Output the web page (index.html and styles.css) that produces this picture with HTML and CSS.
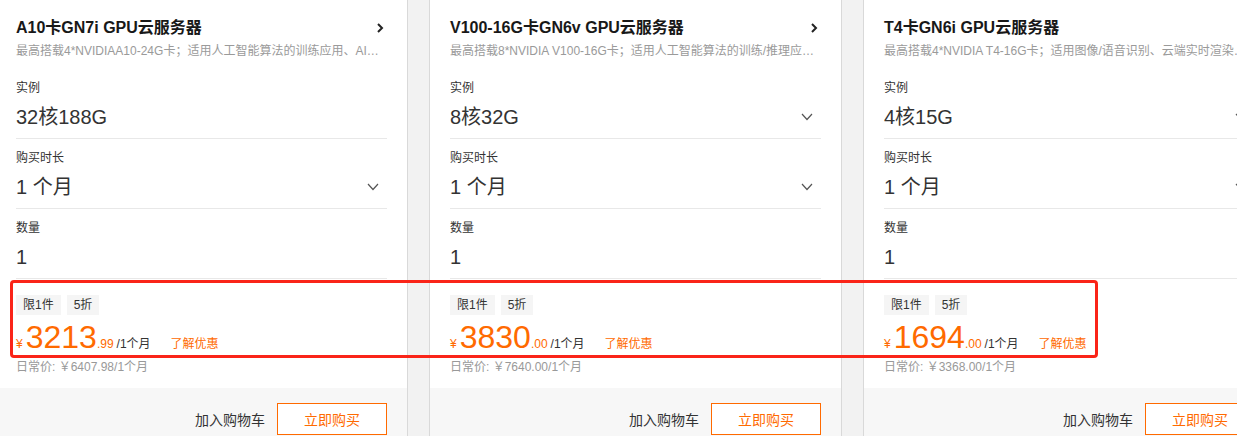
FILE: index.html
```html
<!DOCTYPE html>
<html lang="zh-CN">
<head>
    <meta charset="UTF-8">
    <meta name="viewport" content="width=device-width, initial-scale=1.0">
    <title>GPU云服务器</title>
    <link rel="stylesheet" href="styles.css">
</head>
<body>
    <div class="board">
        <div class="card">
            <div class="card-body">
                <div class="card-head">
                    <h3 class="card-title">A10卡GN7i GPU云服务器</h3>
                    <svg class="arrow-right" width="8" height="12" viewBox="0 0 8 12"><polyline points="2,2 6,6 2,10" fill="none" stroke="#222" stroke-width="2"/></svg>
                </div>
                <p class="card-desc">最高搭载4*NVIDIAA10-24G卡；适用人工智能算法的训练应用、AI推理场景</p>
                <div class="field">
                    <div class="field-label">实例</div>
                    <div class="field-value"><span>32核188G</span></div>
                </div>
                <div class="field">
                    <div class="field-label">购买时长</div>
                    <div class="field-value"><span>1 个月</span><svg class="arrow-down" width="12" height="8" viewBox="0 0 12 8"><polyline points="1,1 6,6.5 11,1" fill="none" stroke="#555" stroke-width="1.2"/></svg></div>
                </div>
                <div class="field">
                    <div class="field-label">数量</div>
                    <div class="field-value"><span>1</span></div>
                </div>
                <div class="price-box">
                    <div class="tags"><span class="tag">限1件</span><span class="tag">5折</span></div>
                    <div class="price-line">
                        <span class="yen">¥</span><span class="price-int">3213</span><span class="price-dec">.99</span><span class="price-unit">/1个月</span><a class="promo">了解优惠</a>
                    </div>
                    <div class="price-old">日常价: ￥6407.98/1个月</div>
                </div>
            </div>
            <div class="card-foot">
                <span class="add-cart">加入购物车</span>
                <button class="buy-btn">立即购买</button>
            </div>
        </div>

        <div class="card">
            <div class="card-body">
                <div class="card-head">
                    <h3 class="card-title">V100-16G卡GN6v GPU云服务器</h3>
                    <svg class="arrow-right" width="8" height="12" viewBox="0 0 8 12"><polyline points="2,2 6,6 2,10" fill="none" stroke="#222" stroke-width="2"/></svg>
                </div>
                <p class="card-desc">最高搭载8*NVIDIA V100-16G卡；适用人工智能算法的训练/推理应用场景</p>
                <div class="field">
                    <div class="field-label">实例</div>
                    <div class="field-value"><span>8核32G</span><svg class="arrow-down" width="12" height="8" viewBox="0 0 12 8"><polyline points="1,1 6,6.5 11,1" fill="none" stroke="#555" stroke-width="1.2"/></svg></div>
                </div>
                <div class="field">
                    <div class="field-label">购买时长</div>
                    <div class="field-value"><span>1 个月</span><svg class="arrow-down" width="12" height="8" viewBox="0 0 12 8"><polyline points="1,1 6,6.5 11,1" fill="none" stroke="#555" stroke-width="1.2"/></svg></div>
                </div>
                <div class="field">
                    <div class="field-label">数量</div>
                    <div class="field-value"><span>1</span></div>
                </div>
                <div class="price-box">
                    <div class="tags"><span class="tag">限1件</span><span class="tag">5折</span></div>
                    <div class="price-line">
                        <span class="yen">¥</span><span class="price-int">3830</span><span class="price-dec">.00</span><span class="price-unit">/1个月</span><a class="promo">了解优惠</a>
                    </div>
                    <div class="price-old">日常价: ￥7640.00/1个月</div>
                </div>
            </div>
            <div class="card-foot">
                <span class="add-cart">加入购物车</span>
                <button class="buy-btn">立即购买</button>
            </div>
        </div>

        <div class="card">
            <div class="card-body">
                <div class="card-head">
                    <h3 class="card-title">T4卡GN6i GPU云服务器</h3>
                    <svg class="arrow-right" width="8" height="12" viewBox="0 0 8 12"><polyline points="2,2 6,6 2,10" fill="none" stroke="#222" stroke-width="2"/></svg>
                </div>
                <p class="card-desc">最高搭载4*NVIDIA T4-16G卡；适用图像/语音识别、云端实时渲染等场景</p>
                <div class="field">
                    <div class="field-label">实例</div>
                    <div class="field-value"><span>4核15G</span><svg class="arrow-down" width="12" height="8" viewBox="0 0 12 8"><polyline points="1,1 6,6.5 11,1" fill="none" stroke="#555" stroke-width="1.2"/></svg></div>
                </div>
                <div class="field">
                    <div class="field-label">购买时长</div>
                    <div class="field-value"><span>1 个月</span><svg class="arrow-down" width="12" height="8" viewBox="0 0 12 8"><polyline points="1,1 6,6.5 11,1" fill="none" stroke="#555" stroke-width="1.2"/></svg></div>
                </div>
                <div class="field">
                    <div class="field-label">数量</div>
                    <div class="field-value"><span>1</span></div>
                </div>
                <div class="price-box">
                    <div class="tags"><span class="tag">限1件</span><span class="tag">5折</span></div>
                    <div class="price-line">
                        <span class="yen">¥</span><span class="price-int">1694</span><span class="price-dec">.00</span><span class="price-unit">/1个月</span><a class="promo">了解优惠</a>
                    </div>
                    <div class="price-old">日常价: ￥3368.00/1个月</div>
                </div>
            </div>
            <div class="card-foot">
                <span class="add-cart">加入购物车</span>
                <button class="buy-btn">立即购买</button>
            </div>
        </div>
    </div>

    <div class="annotation"></div>
</body>
</html>
```

FILE: styles.css
```css
html, body {
    height: 436px;
    overflow: hidden;
}
body {
    margin: 0;
    position: relative;
    background-color: #f2f2f2;
    font-family: 'Liberation Sans', 'Noto Sans CJK SC', sans-serif;
    color: #333;
}
.board {
    display: flex;
    gap: 21px;
    margin: -1px 0 0 -5px;
}
.card {
    flex: 0 0 413px;
    width: 413px;
    min-width: 0;
    box-sizing: border-box;
    background-color: #fff;
    border: 1px solid #d9d9d9;
}
.card-body {
    padding: 16px 20px 11px;
}
.card-head {
    display: flex;
    align-items: center;
    justify-content: space-between;
}
.card-title {
    margin: 0;
    font-size: 16px;
    line-height: 24px;
    font-weight: bold;
    color: #181818;
}
.arrow-right {
    margin-right: 3px;
}
.card-desc {
    margin: 2px 0 9px;
    font-size: 12px;
    line-height: 18px;
    color: #9a9a9a;
    white-space: nowrap;
    overflow: hidden;
    text-overflow: ellipsis;
}
.field {
    padding: 9px 0 7px;
    border-bottom: 1px solid #e8e8e8;
}
.field-label {
    font-size: 12px;
    line-height: 20px;
    color: #333;
}
.field-value {
    display: flex;
    align-items: center;
    justify-content: space-between;
    margin-top: 5px;
    font-size: 20px;
    line-height: 28px;
    color: #333;
}
.arrow-down {
    margin-right: 8px;
}
.price-box {
    padding-top: 16px;
}
.tags {
    display: flex;
    gap: 6px;
}
.tag {
    padding: 0 7px;
    font-size: 12px;
    line-height: 20px;
    background-color: #f5f5f5;
    color: #333;
}
.price-line {
    display: flex;
    align-items: baseline;
    margin-top: 4px;
    line-height: 16px;
    color: #ff6a00;
}
.yen {
    font-size: 12px;
    margin-right: 3px;
}
.price-int {
    font-size: 32px;
    line-height: 36px;
}
.price-dec {
    font-size: 12px;
}
.price-unit {
    font-size: 12px;
    margin-left: 3px;
    color: #333;
}
.promo {
    margin-left: 20px;
    font-size: 12px;
    color: #ff6a00;
}
.price-old {
    margin-top: 2px;
    font-size: 12px;
    line-height: 20px;
    color: #999;
}
.card-foot {
    display: flex;
    align-items: center;
    justify-content: flex-end;
    gap: 12px;
    padding: 15px 20px;
    background-color: #f7f7f7;
}
.add-cart {
    font-size: 14px;
    color: #333;
}
.buy-btn {
    width: 110px;
    height: 32px;
    border: 1px solid #ff6a00;
    background-color: #fff;
    color: #ff6a00;
    font-family: inherit;
    font-size: 14px;
}
.annotation {
    position: absolute;
    left: 10px;
    top: 280px;
    width: 1088px;
    height: 78px;
    box-sizing: border-box;
    border: 3px solid #fa2418;
    border-radius: 4px;
}
```
